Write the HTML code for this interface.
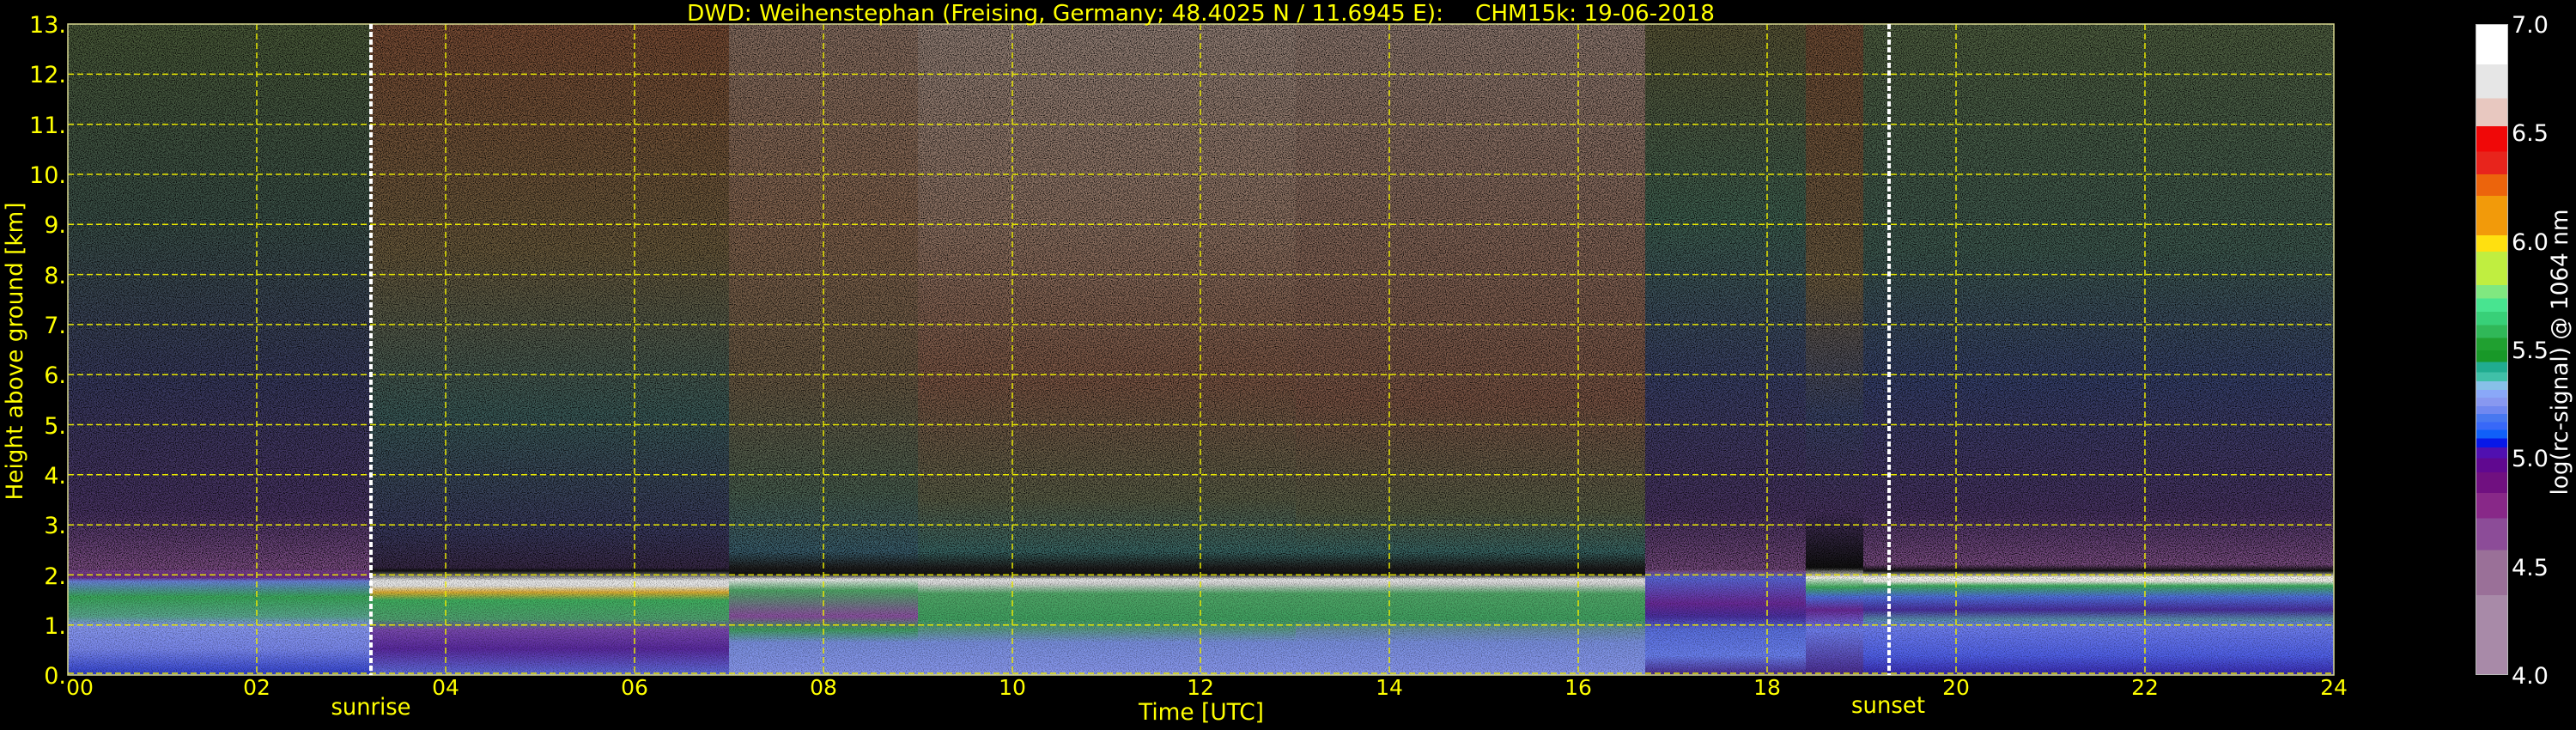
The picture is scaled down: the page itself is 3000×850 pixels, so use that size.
<!DOCTYPE html>
<html><head><meta charset="utf-8"><style>
html,body{margin:0;padding:0;background:#000;}
body{width:3000px;height:850px;position:relative;overflow:hidden;}
.c{position:absolute;top:28px;height:758px;}
#cb{position:absolute;left:2883px;top:28px;width:38px;height:758px;box-sizing:border-box;border:1px solid #bbb;
background:linear-gradient(to bottom,#fff 0%,#fff 6.1%,#e6e6e6 6.1%,#e6e6e6 11.3%,#e8c8c0 11.3%,#e8c8c0 15.6%,#f00808 15.6%,#f00808 19.5%,#e8241c 19.5%,#e8241c 23%,#ec640c 23%,#ec640c 26.3%,#f29a0a 26.3%,#f29a0a 32.4%,#ffe010 32.4%,#ffe010 34.9%,#c0ee40 34.9%,#c0ee40 40.1%,#80e880 40.1%,#80e880 42.1%,#48e490 42.1%,#48e490 44.2%,#38d078 44.2%,#38d078 46.2%,#30b858 46.2%,#30b858 48.2%,#20a030 48.2%,#20a030 50.1%,#189828 50.1%,#189828 51.9%,#20ac90 51.9%,#20ac90 53.5%,#40c0a8 53.5%,#40c0a8 54.9%,#88c0e8 54.9%,#88c0e8 56.2%,#8aa8f8 56.2%,#8aa8f8 57.4%,#8898f0 57.4%,#8898f0 58.7%,#7088f0 58.7%,#7088f0 59.9%,#4878f0 59.9%,#4878f0 61.2%,#3868f8 61.2%,#3868f8 62.4%,#1060f8 62.4%,#1060f8 63.7%,#0818e8 63.7%,#0818e8 65.1%,#5010b0 65.1%,#5010b0 66.7%,#600890 66.7%,#600890 68.9%,#701080 68.9%,#701080 72.1%,#882888 72.1%,#882888 76%,#8c4c98 76%,#8c4c98 80.9%,#9a7098 80.9%,#9a7098 87.8%,#a88aa8 87.8%,#a88aa8 100%);}
</style></head><body>
<div class="c" style="left:79px;width:352px;background:linear-gradient(to bottom,#4a5a38 0%,#3a5048 30%,#383a60 55%,#4a3466 75%,#7e4e86 83.5%,#6a2a8a 85%,#6a84dc 85.6%,#3aa85a 88%,#5aa890 91%,#8898f0 92.5%,#7a88ee 96%,#3040d0 100%);"></div>
<div class="c" style="left:431px;width:418px;background:linear-gradient(to bottom,#7a4c34 0%,#6a5a3c 35%,#3a5a58 60%,#3a3a60 78%,#3a2a4a 83.5%,#111 84%,#eee 85.5%,#e8e8e8 86.3%,#e0b030 87.3%,#40b060 88.5%,#50a070 91.5%,#7a4ab0 93%,#5a2aa0 96%,#6070e0 100%);"></div>
<div class="c" style="left:849px;width:220px;background:linear-gradient(to bottom,#8a7062 0%,#84644e 30%,#6a5a44 55%,#4a6050 72%,#3a6070 81%,#222 83.5%,#111 84.5%,#f0f0f0 85.3%,#50a868 87%,#8a50a0 91%,#40a060 93%,#7a90e0 95%,#8a98f0 100%);"></div>
<div class="c" style="left:1069px;width:440px;background:linear-gradient(to bottom,#968278 0%,#907464 30%,#7c5644 55%,#5c6048 73%,#3a6a68 81%,#222 83.5%,#111 84.5%,#f0f0f0 85.3%,#d8d8d8 86%,#50a868 87.5%,#40a060 91.5%,#5a9a88 93%,#7a90e0 95%,#8a98f0 100%);"></div>
<div class="c" style="left:1509px;width:407px;background:linear-gradient(to bottom,#907a70 0%,#86685a 30%,#7a5444 58%,#5a6048 75%,#3a6a68 81%,#222 83.5%,#111 84.5%,#f0f0f0 85.3%,#d8d8d8 86%,#50a868 87.5%,#40a060 91.5%,#6a90a8 93%,#7a90e0 95%,#8a98f0 100%);"></div>
<div class="c" style="left:1916px;width:187px;background:linear-gradient(to bottom,#5a5636 0%,#3e6050 30%,#3a4068 55%,#4a3464 75%,#7a4c82 84%,#5868d8 85%,#6a2a98 89%,#4a30a0 91%,#5a70e0 93%,#6a80f0 97%,#4a2a90 100%);"></div>
<div class="c" style="left:2103px;width:67px;background:linear-gradient(to bottom,#704c34 0%,#6a5a40 40%,#3a4468 60%,#4a3464 75%,#111 83.5%,#f8f8f0 85%,#40b060 86.5%,#5070e0 88%,#6a2a98 90%,#7080f0 93%,#4a2a90 100%);"></div>
<div class="c" style="left:2170px;width:548px;background:linear-gradient(to bottom,#506040 0%,#3e5a50 35%,#36406c 55%,#4a3466 75%,#7e4e86 83%,#111 84%,#f8f8f0 85%,#f0f0e8 85.6%,#40b060 86.3%,#5070e0 88%,#4a30a0 90%,#5a90b0 91.5%,#7080f0 92.5%,#5060e8 97%,#3828b0 100%);"></div>
<svg width="3000" height="850" style="position:absolute;left:0;top:0" xmlns="http://www.w3.org/2000/svg">
<filter id="n" x="0" y="0" width="100%" height="100%"><feTurbulence type="fractalNoise" baseFrequency="0.9" numOctaves="2" seed="3"/><feColorMatrix type="matrix" values="0 0 0 0 0  0 0 0 0 0  0 0 0 0 0  0 0 0 -4 2.2"/></filter>
<rect x="79" y="28" width="2639" height="636" filter="url(#n)" opacity="0.9"/>
<rect x="79" y="664" width="2639" height="122" filter="url(#n)" opacity="0.35"/>
<g stroke="#e8e800" stroke-width="1.5" stroke-dasharray="7 4" fill="none">
<line x1="79" x2="2718" y1="727.7" y2="727.7"/><line x1="79" x2="2718" y1="669.4" y2="669.4"/><line x1="79" x2="2718" y1="611.1" y2="611.1"/><line x1="79" x2="2718" y1="552.8" y2="552.8"/><line x1="79" x2="2718" y1="494.5" y2="494.5"/><line x1="79" x2="2718" y1="436.2" y2="436.2"/><line x1="79" x2="2718" y1="377.9" y2="377.9"/><line x1="79" x2="2718" y1="319.6" y2="319.6"/><line x1="79" x2="2718" y1="261.3" y2="261.3"/><line x1="79" x2="2718" y1="203" y2="203"/><line x1="79" x2="2718" y1="144.7" y2="144.7"/><line x1="79" x2="2718" y1="86.4" y2="86.4"/><line x1="79" x2="2718" y1="784" y2="784"/>
<line y1="28" y2="786" x1="299" x2="299"/><line y1="28" y2="786" x1="519" x2="519"/><line y1="28" y2="786" x1="739" x2="739"/><line y1="28" y2="786" x1="959" x2="959"/><line y1="28" y2="786" x1="1179" x2="1179"/><line y1="28" y2="786" x1="1398" x2="1398"/><line y1="28" y2="786" x1="1618" x2="1618"/><line y1="28" y2="786" x1="1838" x2="1838"/><line y1="28" y2="786" x1="2058" x2="2058"/><line y1="28" y2="786" x1="2278" x2="2278"/><line y1="28" y2="786" x1="2498" x2="2498"/>
</g>
<rect x="79" y="28" width="2639" height="758" fill="none" stroke="#d8d890" stroke-width="1.5"/>
<g stroke="#fff" stroke-width="4" stroke-dasharray="6 3"><line x1="432" x2="432" y1="28" y2="786"/><line x1="2200" x2="2200" y1="28" y2="786"/></g>
<g font-family="DejaVu Sans, Liberation Sans, sans-serif" fill="#ffff00">
<text x="800" y="24" font-size="26" textLength="881" lengthAdjust="spacingAndGlyphs">DWD: Weihenstephan (Freising, Germany; 48.4025 N / 11.6945 E):</text>
<text x="1718" y="24" font-size="26" textLength="279" lengthAdjust="spacingAndGlyphs">CHM15k: 19-06-2018</text>
<g font-size="27" text-anchor="end">
<text x="77" y="38">13.</text><text x="77" y="96">12.</text><text x="77" y="155">11.</text><text x="77" y="213">10.</text><text x="77" y="271">9.</text><text x="77" y="330">8.</text><text x="77" y="388">7.</text><text x="77" y="446">6.</text><text x="77" y="505">5.</text><text x="77" y="563">4.</text><text x="77" y="621">3.</text><text x="77" y="680">2.</text><text x="77" y="738">1.</text><text x="77" y="796">0.</text>
</g>
<g font-size="25" text-anchor="middle">
<text x="93" y="809">00</text><text x="299" y="809">02</text><text x="519" y="809">04</text><text x="739" y="809">06</text><text x="959" y="809">08</text><text x="1179" y="809">10</text><text x="1398" y="809">12</text><text x="1618" y="809">14</text><text x="1838" y="809">16</text><text x="2058" y="809">18</text><text x="2278" y="809">20</text><text x="2498" y="809">22</text><text x="2718" y="809">24</text>
<text x="432" y="832" textLength="93" lengthAdjust="spacingAndGlyphs" font-size="27">sunrise</text>
<text x="1399" y="838" textLength="146" lengthAdjust="spacingAndGlyphs" font-size="27">Time [UTC]</text>
<text x="2199" y="830" textLength="86" lengthAdjust="spacingAndGlyphs" font-size="27">sunset</text>
</g>
<text transform="translate(26,409) rotate(-90)" text-anchor="middle" font-size="27" textLength="347" lengthAdjust="spacingAndGlyphs">Height above ground [km]</text>
</g>
<g font-family="DejaVu Sans, Liberation Sans, sans-serif" fill="#fff" font-size="27">
<text x="2925" y="38">7.0</text><text x="2925" y="164">6.5</text><text x="2925" y="291">6.0</text><text x="2925" y="417">5.5</text><text x="2925" y="543">5.0</text><text x="2925" y="670">4.5</text><text x="2925" y="796">4.0</text>
<text transform="translate(2990,410) rotate(-90)" text-anchor="middle" font-size="27" textLength="333" lengthAdjust="spacingAndGlyphs">log(rc-signal) @ 1064 nm</text>
</g>
</svg>
<div id="cb"></div>
</body></html>
